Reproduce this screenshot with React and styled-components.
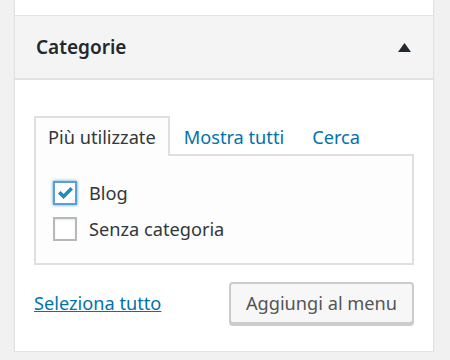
import React from "react";
import styled, { createGlobalStyle } from "styled-components";

const GlobalStyle = createGlobalStyle`
	body {
		margin: 0;
		background: #f1f1f1;
		font-family: "Noto Sans", "Open Sans", sans-serif;
	}
`;

const Column = styled.div`
	margin-left: 14px;
	width: 418px;
	border: 1px solid #e2e2e2;
	border-top: none;
	background: #fff;
	box-shadow: 0 1px 2px rgba(0, 0, 0, 0.05);
`;

const PrevSection = styled.div`
	height: 15px;
	border-bottom: 1px solid #e2e2e2;
`;

const Header = styled.div`
	height: 64px;
	background: #f4f4f4;
	border-bottom: 2px solid #e2e2e2;
	display: flex;
	align-items: center;
	justify-content: space-between;
	padding: 0 22px 0 21px;
	box-sizing: border-box;
`;

const Title = styled.h3`
	margin: 0;
	font-size: 19px;
	font-weight: 600;
	color: #23282d;
`;

const Body = styled.div`
	padding: 36px 19px 27px 19px;
`;

const Tabs = styled.ul`
	display: flex;
	list-style: none;
	margin: 0;
	padding: 0;
`;

const Tab = styled.li`
	font-size: 18.2px;
	line-height: 24px;
	padding: 7px 12px 7px;
	border: 2px solid ${(p) => (p.active ? "#dfdfdf" : "transparent")};
	border-bottom: none;
	background: ${(p) => (p.active ? "#fdfdfd" : "transparent")};
	color: ${(p) => (p.active ? "#32373c" : "#0073aa")};
	margin-bottom: -2px;
	position: relative;
	z-index: 1;
`;

const TabPanel = styled.div`
	border: 2px solid #dfdfdf;
	background: #fdfdfd;
	padding: 25px 17px 22px;
	display: flex;
	flex-direction: column;
	gap: 12px;
`;

const Row = styled.label`
	display: flex;
	align-items: center;
	gap: 12px;
	font-size: 18.2px;
	color: #32373c;
	height: 24px;
`;

const Box = styled.span`
	width: 24px;
	height: 24px;
	box-sizing: border-box;
	border: 2px solid ${(p) => (p.checked ? "#5b9dd9" : "#b4b9be")};
	box-shadow: ${(p) =>
		p.checked ? "0 0 3px rgba(30, 140, 190, 0.8)" : "inset 0 1px 2px rgba(0,0,0,0.1)"};
	background: #fff;
	display: flex;
	align-items: center;
	justify-content: center;
`;

const Footer = styled.div`
	display: flex;
	align-items: center;
	justify-content: space-between;
	margin-top: 17px;
`;

const Link = styled.a`
	font-size: 18.2px;
	color: #0073aa;
	text-decoration: underline;
`;

const Button = styled.button`
	font-family: inherit;
	font-size: 18.2px;
	color: #555;
	background: #f7f7f7;
	border: 2px solid #ccc;
	border-radius: 4px;
	box-shadow: 0 2px 0 #ccc;
	height: 42px;
	width: 185px;
	padding: 0;
`;

const Checkbox = ({ checked, label }) => (
	<Row>
		<Box checked={checked}>
			{checked && (
				<svg width="20" height="20" viewBox="0 0 20 20">
					<path d="M3 10.5l2.6-2.6 3 3L15.5 4 18 6.6 8.6 16z" fill="#1e8cbe" />
				</svg>
			)}
		</Box>
		{label}
	</Row>
);

const App = () => (
	<>
		<GlobalStyle />
		<Column>
			<PrevSection />
			<Header>
				<Title>Categorie</Title>
				<svg width="13" height="9" viewBox="0 0 13 9">
					<polygon points="6.5,0 13,9 0,9" fill="#23282d" />
				</svg>
			</Header>
			<Body>
				<Tabs>
					<Tab active>Più utilizzate</Tab>
					<Tab>Mostra tutti</Tab>
					<Tab>Cerca</Tab>
				</Tabs>
				<TabPanel>
					<Checkbox checked label="Blog" />
					<Checkbox label="Senza categoria" />
				</TabPanel>
				<Footer>
					<Link href="#">Seleziona tutto</Link>
					<Button>Aggiungi al menu</Button>
				</Footer>
			</Body>
		</Column>
	</>
);

export default App;
